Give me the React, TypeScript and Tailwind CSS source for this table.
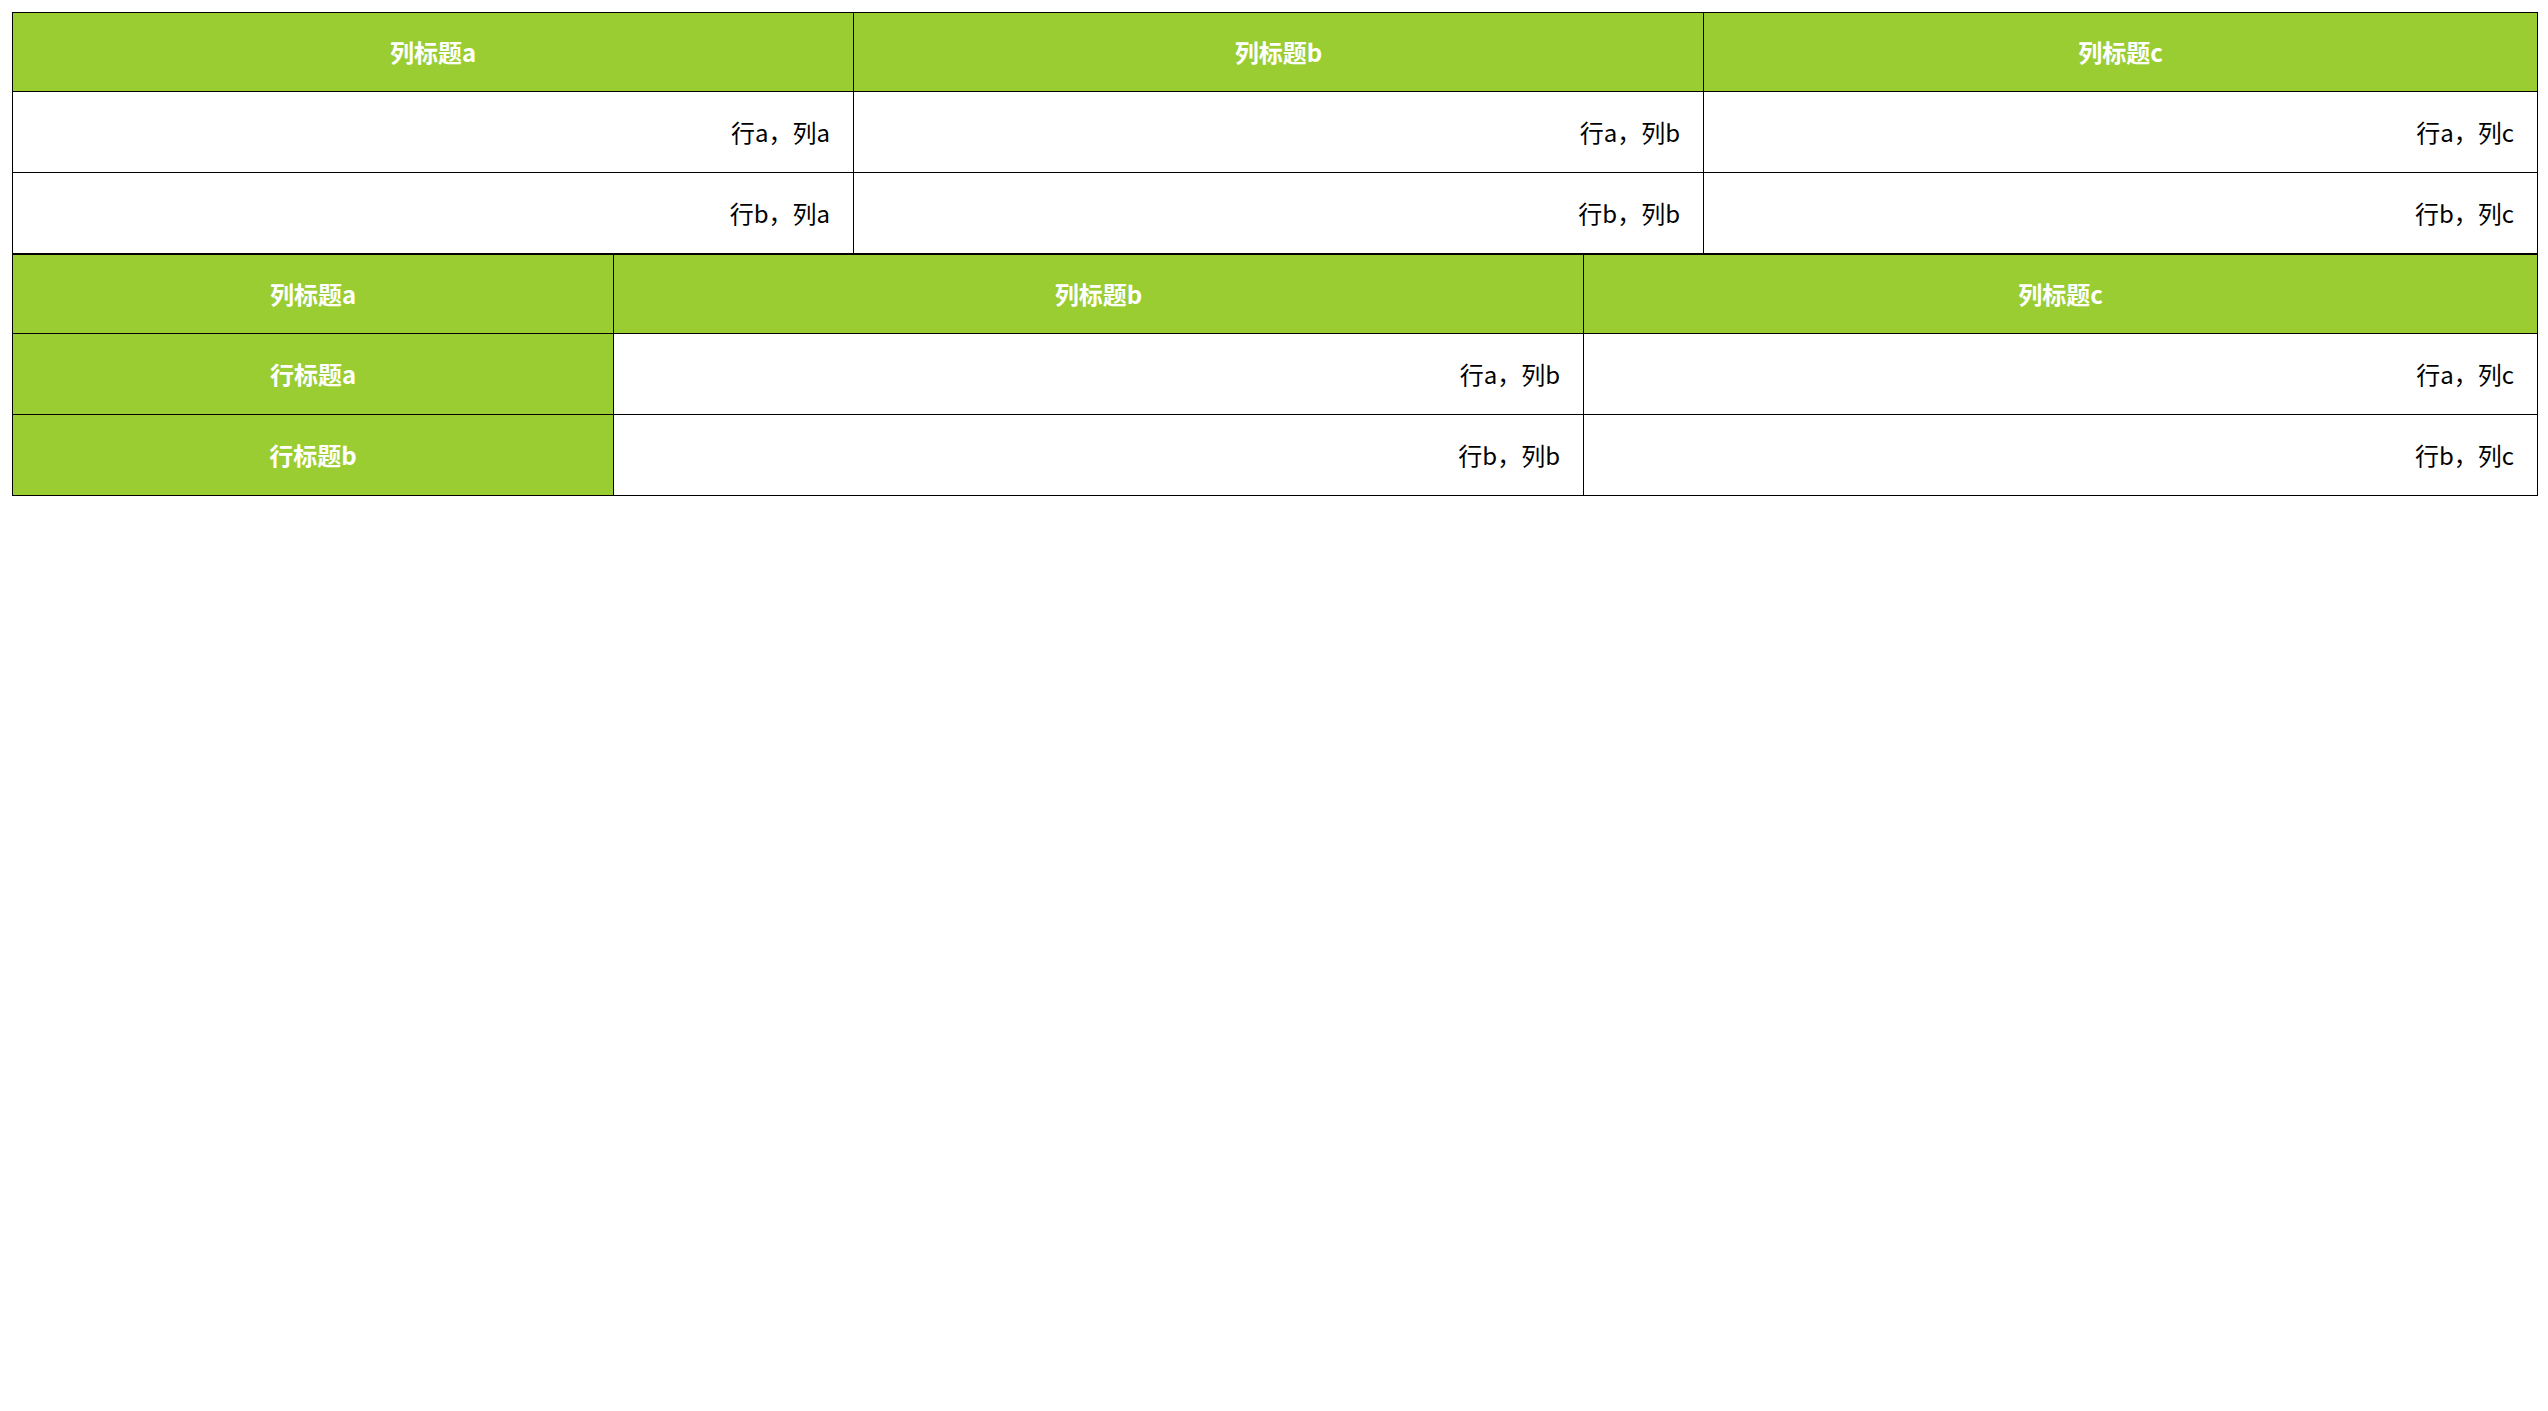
const font = {
  fontFamily: '"Noto Sans CJK SC", "Noto Sans", sans-serif',
};

const first = {
  cols: [841, 850, 834],
  head: ["列标题a", "列标题b", "列标题c"],
  rows: [
    ["行a，列a", "行a，列b", "行a，列c"],
    ["行b，列a", "行b，列b", "行b，列c"],
  ],
};

const second = {
  cols: [601, 970, 954],
  head: ["列标题a", "列标题b", "列标题c"],
  rows: [
    ["行标题a", "行a，列b", "行a，列c"],
    ["行标题b", "行b，列b", "行b，列c"],
  ],
};

function DataTable({
  cols,
  head,
  rows,
  rowHeaders,
}: {
  cols: number[];
  head: string[];
  rows: string[][];
  rowHeaders?: boolean;
}) {
  return (
    <table className="table-fixed border-collapse border border-black w-[2525px] text-[24px]">
      <colgroup>
        {cols.map((w, i) => (
          <col key={i} style={{ width: w }} />
        ))}
      </colgroup>
      <thead>
        <tr>
          {head.map((h) => (
            <th
              key={h}
              className="h-[79px] border border-black bg-[#9acd32] text-white font-bold text-center p-0"
            >
              {h}
            </th>
          ))}
        </tr>
      </thead>
      <tbody>
        {rows.map((row, r) => (
          <tr key={r}>
            {row.map((cell, c) =>
              rowHeaders && c === 0 ? (
                <th
                  key={c}
                  className="h-[81px] border border-black bg-[#9acd32] text-white font-bold text-center p-0"
                >
                  {cell}
                </th>
              ) : (
                <td
                  key={c}
                  className="h-[81px] border border-black bg-white text-black text-right pr-[23px] py-0"
                >
                  {cell}
                </td>
              )
            )}
          </tr>
        ))}
      </tbody>
    </table>
  );
}

export default function App() {
  return (
    <div className="min-h-screen bg-white pt-[12px] pl-[12px]" style={font}>
      <DataTable {...first} />
      <DataTable {...second} rowHeaders />
    </div>
  );
}
